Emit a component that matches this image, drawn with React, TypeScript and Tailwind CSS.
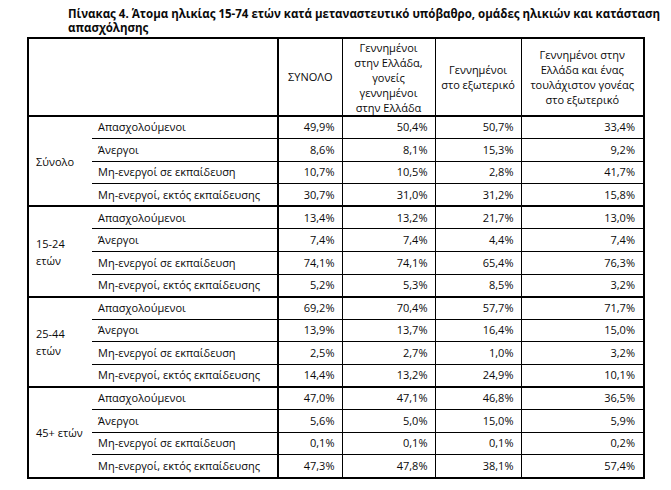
const groups = [
  {
    label: ['Σύνολο'],
    rows: [
      ['Απασχολούμενοι', '49,9%', '50,4%', '50,7%', '33,4%'],
      ['Άνεργοι', '8,6%', '8,1%', '15,3%', '9,2%'],
      ['Μη-ενεργοί σε εκπαίδευση', '10,7%', '10,5%', '2,8%', '41,7%'],
      ['Μη-ενεργοί, εκτός εκπαίδευσης', '30,7%', '31,0%', '31,2%', '15,8%'],
    ],
  },
  {
    label: ['15-24', 'ετών'],
    rows: [
      ['Απασχολούμενοι', '13,4%', '13,2%', '21,7%', '13,0%'],
      ['Άνεργοι', '7,4%', '7,4%', '4,4%', '7,4%'],
      ['Μη-ενεργοί σε εκπαίδευση', '74,1%', '74,1%', '65,4%', '76,3%'],
      ['Μη-ενεργοί, εκτός εκπαίδευσης', '5,2%', '5,3%', '8,5%', '3,2%'],
    ],
  },
  {
    label: ['25-44', 'ετών'],
    rows: [
      ['Απασχολούμενοι', '69,2%', '70,4%', '57,7%', '71,7%'],
      ['Άνεργοι', '13,9%', '13,7%', '16,4%', '15,0%'],
      ['Μη-ενεργοί σε εκπαίδευση', '2,5%', '2,7%', '1,0%', '3,2%'],
      ['Μη-ενεργοί, εκτός εκπαίδευσης', '14,4%', '13,2%', '24,9%', '10,1%'],
    ],
  },
  {
    label: ['45+ ετών'],
    rows: [
      ['Απασχολούμενοι', '47,0%', '47,1%', '46,8%', '36,5%'],
      ['Άνεργοι', '5,6%', '5,0%', '15,0%', '5,9%'],
      ['Μη-ενεργοί σε εκπαίδευση', '0,1%', '0,1%', '0,1%', '0,2%'],
      ['Μη-ενεργοί, εκτός εκπαίδευσης', '47,3%', '47,8%', '38,1%', '57,4%'],
    ],
  },
];

export default function App() {
  return (
    <main className="w-[671px] h-[490px] bg-white text-[#0a0a0a] font-['Open_Sans',sans-serif] overflow-hidden">
      <h1 className="pt-[7px] pl-[68px] pr-2 text-[11.5px] font-bold leading-[14px]">
        Πίνακας 4. Άτομα ηλικίας 15-74 ετών κατά μεταναστευτικό υπόβαθρο, ομάδες ηλικιών και κατάσταση απασχόλησης
      </h1>

      <table className="ml-[27px] mt-[2px] border-collapse table-fixed border-2 border-black text-[11px]">
        <colgroup>
          <col className="w-[64px]" />
          <col className="w-[186px]" />
          <col className="w-[64px]" />
          <col className="w-[93px]" />
          <col className="w-[86px]" />
          <col className="w-[123px]" />
        </colgroup>
        <thead>
          <tr className="h-[78px] border-b-2 border-black">
            <th colSpan={2} className="border-r-2 border-black"></th>
            <th className="font-normal text-center align-middle border-r border-black">ΣΥΝΟΛΟ</th>
            <th className="font-normal text-center align-middle leading-[15px] border-r border-black">
              Γεννημένοι<br />στην Ελλάδα,<br />γονείς<br />γεννημένοι<br />στην Ελλάδα
            </th>
            <th className="font-normal text-center align-middle leading-[15px] border-r border-black">
              Γεννημένοι<br />στο εξωτερικό
            </th>
            <th className="font-normal text-center align-middle leading-[15px]">
              Γεννημένοι στην<br />Ελλάδα και ένας<br />τουλάχιστον γονέας<br />στο εξωτερικό
            </th>
          </tr>
        </thead>
        <tbody>
          {groups.map((g, gi) =>
            g.rows.map((r, ri) => (
              <tr
                key={gi + '-' + ri}
                className={`h-[22.6px] ${ri === 0 && gi > 0 ? 'border-t-2 border-black' : ''}`}
              >
                {ri === 0 && (
                  <td rowSpan={4} className="pl-[7px] align-middle leading-[17px]">
                    {g.label.map((l) => (
                      <div key={l}>{l}</div>
                    ))}
                  </td>
                )}
                <td
                  className={`pl-[6px] border-r-2 border-black ${ri > 0 ? 'border-t border-t-black' : ''}`}
                >
                  {r[0]}
                </td>
                <td className={`pr-[7px] text-right border-r border-black ${ri > 0 ? 'border-t' : ''}`}>{r[1]}</td>
                <td className={`pr-[7px] text-right border-r border-black ${ri > 0 ? 'border-t' : ''}`}>{r[2]}</td>
                <td className={`pr-[7px] text-right border-r border-black ${ri > 0 ? 'border-t' : ''}`}>{r[3]}</td>
                <td className={`pr-[8px] text-right border-black ${ri > 0 ? 'border-t' : ''}`}>{r[4]}</td>
              </tr>
            ))
          )}
        </tbody>
      </table>
    </main>
  );
}
